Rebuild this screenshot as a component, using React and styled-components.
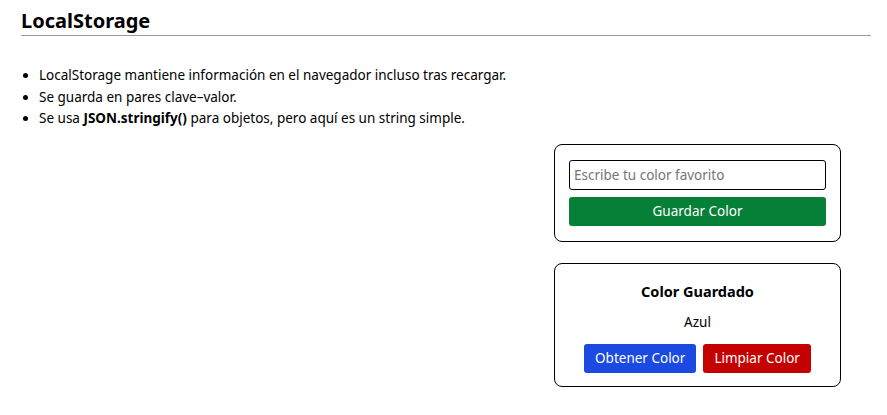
import React, { useState } from "react";
import styled, { createGlobalStyle } from "styled-components";

const GlobalStyle = createGlobalStyle`
  body {
    margin: 0;
    background: #ffffff;
    font-family: "Noto Sans", "Open Sans", sans-serif;
    color: #000000;
  }
`;

const Page = styled.div`
  padding: 8px 16px 20px 21px;
`;

const Title = styled.h2`
  margin: 0;
  padding-bottom: 2px;
  font-size: 20px;
  font-weight: 700;
  line-height: 25px;
  border-bottom: 1px solid #9a9a9a;
`;

const List = styled.ul`
  margin: 29px 0 0 0;
  padding-left: 18px;
  font-size: 13.5px;
  line-height: 21.5px;
`;

const Item = styled.li``;

const Panels = styled.div`
  display: flex;
  flex-direction: column;
  align-items: flex-end;
  gap: 21px;
  padding-right: 30px;
  margin-top: 14px;
`;

const Card = styled.div`
  width: 287px;
  box-sizing: border-box;
  border: 1px solid #000;
  border-radius: 8px;
  padding: ${(p) => p.$pad || "15px 14px"};
  display: flex;
  flex-direction: column;
  align-items: ${(p) => (p.$center ? "center" : "stretch")};
  gap: 7px;
`;

const Input = styled.input`
  height: 30px;
  box-sizing: border-box;
  border: 1px solid #000;
  border-radius: 3px;
  padding: 0 4px;
  font-family: inherit;
  font-size: 13.5px;
  outline: none;
  &::placeholder {
    color: #757575;
  }
`;

const Button = styled.button`
  height: 29px;
  border: none;
  border-radius: 3px;
  padding: 0 11px;
  background: ${(p) => p.$bg};
  color: #fff;
  font-family: inherit;
  font-size: 13.5px;
  cursor: pointer;
`;

const CardTitle = styled.h3`
  margin: 0;
  font-size: 14.5px;
  font-weight: 700;
  line-height: 20px;
`;

const Value = styled.p`
  margin: 5px 0 6px;
  font-size: 13.5px;
  line-height: 18px;
`;

const Row = styled.div`
  display: flex;
  gap: 7px;
`;

export default function App() {
  const [text, setText] = useState("");
  const [saved, setSaved] = useState("Azul");

  return (
    <>
      <GlobalStyle />
      <Page>
        <Title>LocalStorage</Title>
        <List>
          <Item>LocalStorage mantiene información en el navegador incluso tras recargar.</Item>
          <Item>Se guarda en pares clave–valor.</Item>
          <Item>
            Se usa <b>JSON.stringify()</b> para objetos, pero aquí es un string simple.
          </Item>
        </List>
        <Panels>
          <Card>
            <Input
              placeholder="Escribe tu color favorito"
              value={text}
              onChange={(e) => setText(e.target.value)}
            />
            <Button $bg="#067f37" onClick={() => setSaved(text)}>
              Guardar Color
            </Button>
          </Card>
          <Card $center $pad="17px 14px 13px">
            <CardTitle>Color Guardado</CardTitle>
            <Value>{saved}</Value>
            <Row>
              <Button $bg="#1a4ae1">Obtener Color</Button>
              <Button $bg="#c50000" onClick={() => setSaved("")}>
                Limpiar Color
              </Button>
            </Row>
          </Card>
        </Panels>
      </Page>
    </>
  );
}
